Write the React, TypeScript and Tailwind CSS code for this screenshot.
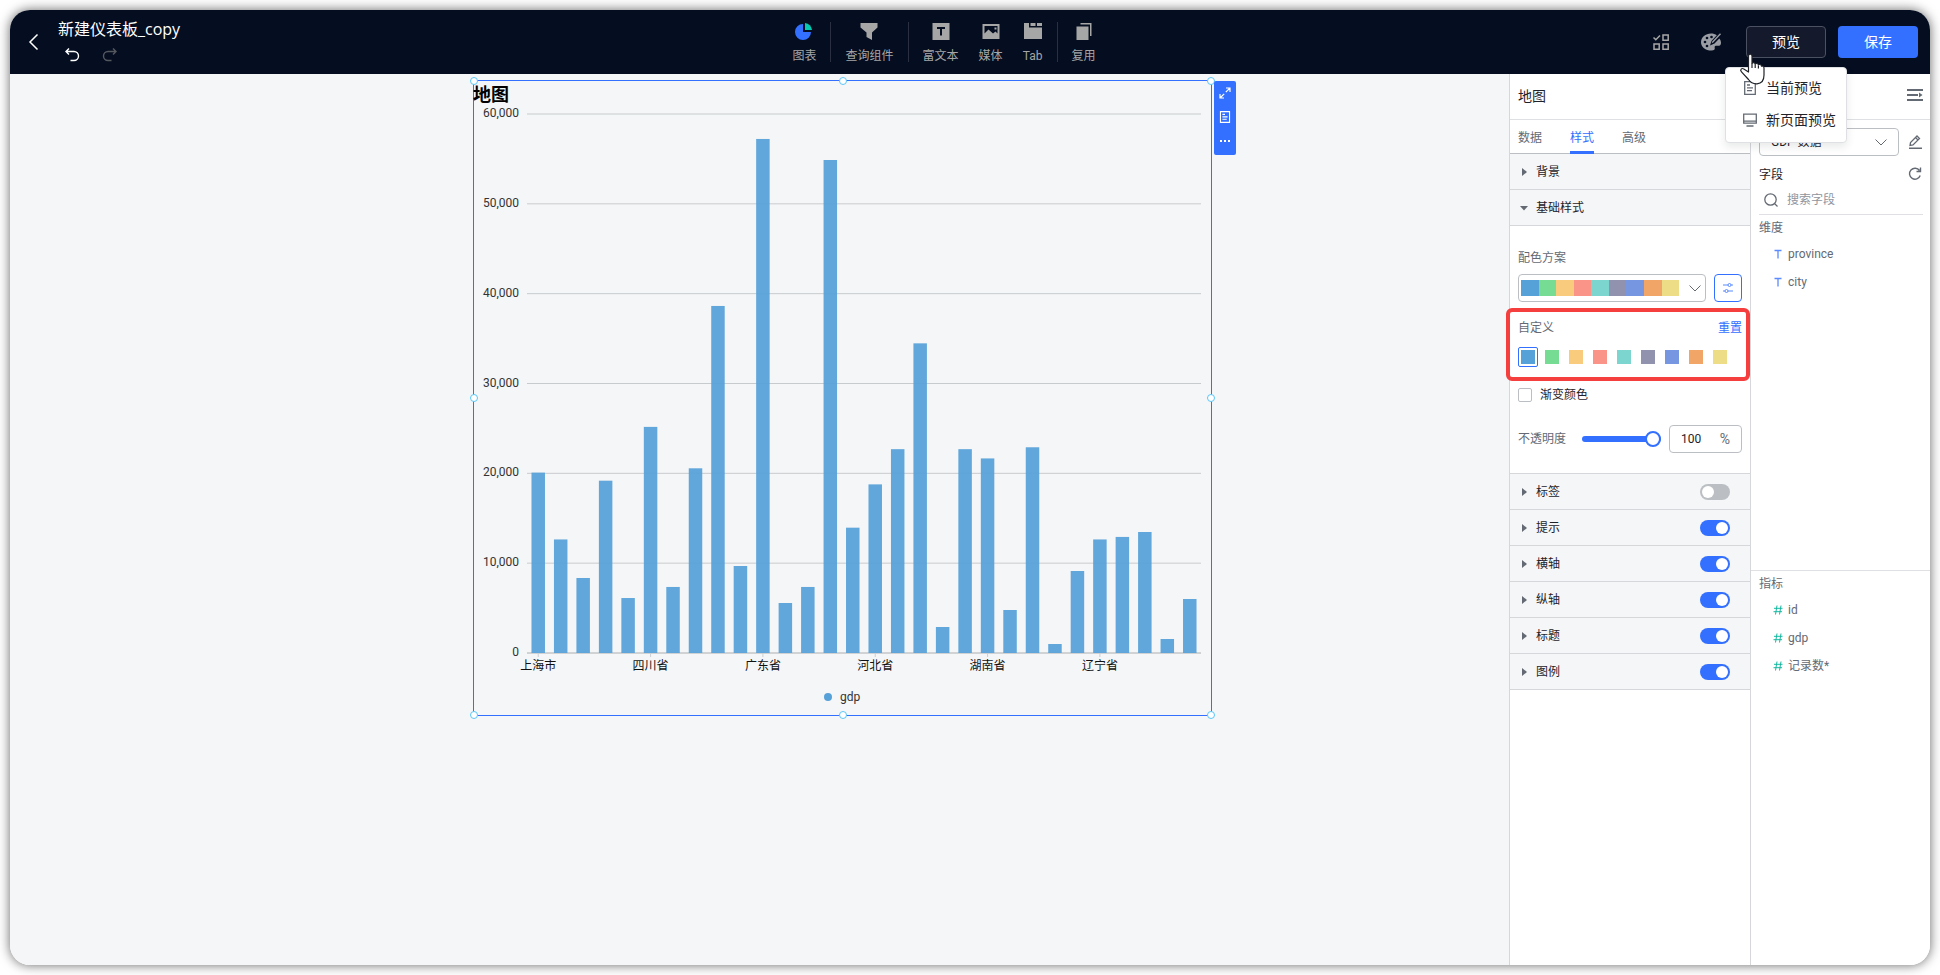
import { useState } from 'react';
import type { ReactNode } from 'react';

const PALETTE = [
  { name: 'blue', bg: 'bg-[#57a1d9]' },
  { name: 'green', bg: 'bg-[#76db93]' },
  { name: 'amber', bg: 'bg-[#f9cb7d]' },
  { name: 'coral', bg: 'bg-[#fa9488]' },
  { name: 'teal', bg: 'bg-[#7dd5cf]' },
  { name: 'slate', bg: 'bg-[#9192ae]' },
  { name: 'indigo', bg: 'bg-[#7796e1]' },
  { name: 'orange', bg: 'bg-[#f1a667]' },
  { name: 'yellow', bg: 'bg-[#eedd87]' },
];

const GDP = [
  20080, 12640, 8350, 19180, 6120, 25170, 7350, 20560, 38630, 9685, 57220, 5566, 7350, 54880, 13950,
  18770, 22690, 34470, 2894, 22690, 21660, 4787, 22900, 1000, 9128, 12640, 12920, 13470, 1558, 6011,
];

const X_LABELS = ['上海市', '四川省', '广东省', '河北省', '湖南省', '辽宁省'];

const PLOT = { left: 53, right: 727, top: 5, bottom: 544, max: 60000 };

const HANDLES = [
  'left-0 top-0',
  'left-1/2 top-0',
  'left-full top-0',
  'left-0 top-1/2',
  'left-full top-1/2',
  'left-0 top-full',
  'left-1/2 top-full',
  'left-full top-full',
];

function BarChart() {
  const band = (PLOT.right - PLOT.left) / GDP.length;
  const y = (v: number) => PLOT.bottom - (v / PLOT.max) * (PLOT.bottom - PLOT.top);
  const ticks = [0, 10000, 20000, 30000, 40000, 50000, 60000];

  return (
    <svg
      viewBox="0 0 737 606"
      className="block w-full overflow-visible text-xs"
      role="img"
      aria-label="gdp"
    >
      {ticks.map((v) => (
        <g key={v}>
          <line
            x1={PLOT.left}
            x2={PLOT.right}
            y1={y(v)}
            y2={y(v)}
            stroke={v === 0 ? '#d0d2d4' : '#c8cbce'}
            strokeWidth={v === 0 ? 2 : 1}
          />
          <text x={45} y={y(v) + 3} textAnchor="end" fill="#333">
            {v.toLocaleString('en-US')}
          </text>
        </g>
      ))}
      {GDP.map((v, i) => (
        <rect
          key={i}
          x={PLOT.left + band * i + band * 0.2}
          y={y(v)}
          width={band * 0.6}
          height={PLOT.bottom - y(v)}
          fill="#57a1d9"
          fillOpacity={0.94}
        />
      ))}
      {X_LABELS.map((label, i) => {
        const x = PLOT.left + band * (i * 5 + 0.5);
        return (
          <g key={label}>
            <line x1={x} x2={x} y1={544} y2={548} stroke="#cccfd2" />
            <text x={x} y={561} textAnchor="middle" fill="#111">
              {label}
            </text>
          </g>
        );
      })}
      <circle cx={354} cy={588} r={4} fill="#57a1d9" />
      <text x={366} y={592} fill="#333">
        gdp
      </text>
    </svg>
  );
}

function Tool({ label, children }: { label: string; children: ReactNode }) {
  return (
    <button className="flex flex-col items-center gap-[5px] px-[10px] pt-[3px] text-xs leading-5 text-[#a6a6a6]">
      <svg width="20" height="20" viewBox="0 0 20 20" fill="#a6a6a6" aria-hidden="true">
        {children}
      </svg>
      {label}
    </button>
  );
}

function ToolGroup({ last, children }: { last?: boolean; children: ReactNode }) {
  return (
    <div className={`flex h-10 items-center px-1 ${last ? '' : 'border-r border-[#2a3040]'}`}>
      {children}
    </div>
  );
}

function Caret({ open }: { open?: boolean }) {
  return (
    <svg width="10" height="10" viewBox="0 0 10 10" fill="#646a73" aria-hidden="true">
      {open ? <path d="M2 3h8L6 7.500z" /> : <path d="M4 1v8l5-4z" />}
    </svg>
  );
}

function Chevron() {
  return (
    <svg width="12" height="12" viewBox="0 0 12 12" fill="none" stroke="#646a73" aria-hidden="true">
      <path d="M.5 3.500 6 9l5.500-5.500" />
    </svg>
  );
}

function DocIcon({ className }: { className: string }) {
  return (
    <svg
      width="14"
      height="14"
      viewBox="0 0 14 14"
      fill="none"
      stroke="currentColor"
      strokeWidth="1.300"
      className={className}
      aria-hidden="true"
    >
      <path d="M1.700.700h10.600v12.600H1.700zM4 4h3M4 6.800h6M4 9.600h5" />
    </svg>
  );
}

function Section({ title, open }: { title: string; open?: boolean }) {
  return (
    <button className="flex h-9 w-full items-center gap-2 border-b border-[#d5d7da] bg-[#f5f6f7] pl-2 text-[#1f2329]">
      <Caret open={open} />
      {title}
    </button>
  );
}

function SwitchSection({ title, defaultOn }: { title: string; defaultOn: boolean }) {
  const [on, setOn] = useState(defaultOn);
  return (
    <label className="flex h-9 items-center gap-2 border-b border-[#d5d7da] bg-[#f5f6f7] pr-5 pl-2 text-[#1f2329]">
      <Caret />
      <span className="flex-1">{title}</span>
      <input
        type="checkbox"
        role="switch"
        checked={on}
        onChange={(e) => setOn(e.target.checked)}
        className="h-4 w-[30px] appearance-none rounded-full bg-[#bbbfc4] p-[2px] before:block before:size-3 before:rounded-full before:bg-white checked:bg-[#3370ff] checked:before:translate-x-[14px]"
      />
    </label>
  );
}

function Field({ kind, name }: { kind: 'text' | 'number'; name: string }) {
  return (
    <li className="flex h-7 items-center gap-[5px] pl-[14px]">
      <svg width="10" height="10" viewBox="0 0 10 10" fill="none" aria-hidden="true">
        {kind === 'text' ? (
          <path d="M1.500 1.500h7M5 1.500V9.500" stroke="#5b8bff" strokeWidth="1.300" />
        ) : (
          <path d="M4 .5 2.500 9.500M8 .5 6.500 9.500M1 3.300h8.500M.5 6.700H9" stroke="#14b8a0" />
        )}
      </svg>
      {name}
    </li>
  );
}

function Header() {
  return (
    <header className="relative z-20 flex h-16 shrink-0 items-center bg-[#050e21]">
      <div className="flex flex-1 items-center">
        <button aria-label="返回" className="ml-4">
          <svg width="16" height="20" viewBox="0 0 16 20" fill="none" stroke="#fff" strokeWidth="1.500">
            <path d="M11.500 2.500 4 10l7.500 7.500" />
          </svg>
        </button>
        <div className="ml-4 flex flex-col gap-[2px]">
          <h1 className="font-['Open_Sans','Noto_Sans_CJK_SC',sans-serif] text-base leading-6 text-white">
            新建仪表板_copy
          </h1>
          <div className="flex h-6 items-center gap-[22px] pl-[6px]">
            <button aria-label="撤销">
              <svg width="16" height="16" viewBox="0 0 16 16" fill="none" stroke="#fff" strokeWidth="1.400">
                <path d="M5 1.500 2 4.500l3 3M2 4.500h8a4.500 4.500 0 0 1 0 9H6.500" />
              </svg>
            </button>
            <button aria-label="重做" disabled>
              <svg width="16" height="16" viewBox="0 0 16 16" fill="none" stroke="#55585f" strokeWidth="1.400">
                <path d="M11 1.500l3 3-3 3M14 4.500H6a4.500 4.500 0 0 0 0 9h3.500" />
              </svg>
            </button>
          </div>
        </div>
      </div>

      <nav className="mr-10 flex items-center">
        <ToolGroup>
          <Tool label="图表">
            <path d="M9 3v8h8a8 8 0 1 1-8-8z" fill="#3370ff" />
            <path d="M11 2a7.500 7.500 0 0 1 7 7h-7z" fill="#04c9b0" />
          </Tool>
        </ToolGroup>
        <ToolGroup>
          <Tool label="查询组件">
            <path d="M1.500 2h17v4.500L13 11.500V19l-5.500-3v-4.500l-6-5z" />
          </Tool>
        </ToolGroup>
        <ToolGroup>
          <Tool label="富文本">
            <path d="M1.500 2h17v17h-17zM6 6v2h3v6.500h2V8h3V6z" fillRule="evenodd" />
          </Tool>
          <Tool label="媒体">
            <path
              d="M1.500 3h17v15h-17zM3.500 5v7.500l4-4 4.500 4 2.500-2 2 2V5zM13.500 6.500h2v2h-2z"
              fillRule="evenodd"
            />
          </Tool>
          <Tool label="Tab">
            <path d="M1 2h5v4.500h13V18H1zM7.500 2h5v3h-5zM14 2h5v3h-5z" />
          </Tool>
        </ToolGroup>
        <ToolGroup last>
          <Tool label="复用">
            <path d="M2.500 5.500h12V19h-12zM6.500 2h11v13H16V3.500H6.500z" />
          </Tool>
        </ToolGroup>
      </nav>

      <div className="flex flex-1 items-center justify-end gap-3 pr-3 text-sm">
        <button aria-label="批量操作" className="mr-[20px]">
          <svg width="16" height="16" viewBox="0 0 16 16" fill="none" stroke="#a6a6a6" strokeWidth="1.500">
            <path d="M.5 3.500 2.800 5.800 7 1.500M10 1h5.200v5.200H10zM1 10h5.200v5.200H1zM10 10h5.200v5.200H10z" />
          </svg>
        </button>
        <button aria-label="仪表板样式" className="mr-[13px]">
          <svg width="20" height="18" viewBox="0 0 20 18" fill="#9a9da3">
            <path d="M10 .5c2.200 0 4.300.6 5.800 1.700L10.500 8 9 12.500l4.500-2 4.800-5C19.400 6.800 20 8.300 20 10c0 2.500-1.700 3-3.500 2.800-2-.2-3.300.3-2.800 1.900.5 1.800-.7 2.800-3.200 2.800C4.500 17.500 0 14 0 9.200 0 4.200 4.500.5 10 .5z" />
            <path d="M19 .2l1 1-7.800 8.300-1.500.7.500-1.600z" />
            <g fill="#050e21">
              <circle cx="10.500" cy="4" r="1.300" />
              <circle cx="6" cy="5" r="1.300" />
              <circle cx="4" cy="9" r="1.300" />
              <circle cx="6" cy="13" r="1.300" />
            </g>
          </svg>
        </button>
        <div className="relative">
          <button className="h-8 w-20 rounded border border-[#4b5160] bg-[#141a2b] text-white">
            预览
          </button>
          <ul
            role="menu"
            className="absolute top-[41px] left-[-21px] w-[122px] rounded border border-[#dee0e3] bg-white pt-1 pb-[6px] text-[#1f2329] shadow-[0_4px_8px_rgba(31,35,41,0.1)]"
          >
            <li role="none">
              <button role="menuitem" className="flex h-8 w-full items-center gap-[9px] pl-[17px]">
                <DocIcon className="text-[#646a73]" />
                当前预览
              </button>
            </li>
            <li role="none">
              <button role="menuitem" className="flex h-8 w-full items-center gap-[9px] pl-[17px]">
                <svg width="14" height="14" viewBox="0 0 14 14" fill="none" stroke="#646a73" strokeWidth="1.300">
                  <path d="M.7 1.200h12.600v9H.7zM.7 8.200h12.600M3.500 13h7" />
                </svg>
                新页面预览
              </button>
            </li>
          </ul>
          {/* pointer hand resting on the preview button */}
          <svg
            width="26"
            height="32"
            viewBox="0 0 26 32"
            fill="#fff"
            stroke="#1f2329"
            strokeWidth="1.200"
            strokeLinejoin="round"
            className="pointer-events-none absolute top-[27px] left-[-7px]"
            aria-hidden="true"
          >
            <path d="M9.500 17V3c0-2.500 3.500-2.500 3.500 0v7.500c.5-1.200 3-1 3.200.7.600-1.200 3-.9 3.200.8.700-1 3-.7 3.100 1.200.6-.4 2.500 0 2.500 1.800v7c0 5-2.500 8.500-7 8.800-4 .2-6.500-1.300-8.500-4.300L2.500 18.800c-2-2.300.3-4.100 2.300-2.800L9.500 19z" />
            <path d="M13 10.500V15M16.200 11.500V15M19.400 12.500V15.500" fill="none" />
          </svg>
        </div>
        <button className="h-8 w-20 rounded bg-[#3370ff] text-white">保存</button>
      </div>
    </header>
  );
}

function Canvas() {
  return (
    <main className="relative min-w-0 flex-1 bg-[#f5f6f7]">
      <section className="absolute top-[6px] left-[463px] w-[739px] border border-[#3370ff]">
        <h2 className="-ml-px h-7 text-lg leading-7 font-bold text-black">地图</h2>
        <BarChart />
        {HANDLES.map((pos) => (
          <span
            key={pos}
            className={`absolute size-2 -translate-1/2 rounded-full border border-[#59c7f9] bg-white ${pos}`}
          />
        ))}
        <div className="absolute top-0 left-full ml-[3px] flex h-[74px] w-[22px] flex-col items-center justify-around rounded-[2px] bg-[#3370ff] pb-[2px] text-white">
          <button aria-label="放大">
            <svg width="12" height="12" viewBox="0 0 12 12" fill="none" stroke="currentColor" strokeWidth="1.200">
              <path d="M7 1h4v4M11 1 6.800 5.200M5 11H1V7M1 11l4.200-4.200" />
            </svg>
          </button>
          <button aria-label="查看数据">
            <DocIcon className="size-3" />
          </button>
          <button aria-label="更多">
            <svg width="12" height="12" viewBox="0 0 12 12" fill="currentColor">
              <path d="M1 5h2v2H1zM5 5h2v2H5zM9 5h2v2H9z" />
            </svg>
          </button>
        </div>
      </section>
    </main>
  );
}

function StylePanel() {
  const [selected, setSelected] = useState('blue');
  const [opacity, setOpacity] = useState(100);

  return (
    <aside className="w-[241px] shrink-0 border-l border-[#d5d7da] bg-white">
      <h2 className="h-[46px] border-b border-[#dee0e3] pl-2 text-sm leading-[44px] text-[#1f2329]">
        地图
      </h2>
      <div
        role="tablist"
        className="flex h-[34px] gap-7 border-b border-[#bbbfc4] pt-[2px] pl-2 text-[#646a73]"
      >
        <button role="tab">数据</button>
        <button role="tab" aria-selected="true" className="relative text-[#3370ff]">
          样式
          <span className="absolute inset-x-0 -bottom-px h-[3px] bg-[#3370ff]" />
        </button>
        <button role="tab">高级</button>
      </div>

      <Section title="背景" />
      <Section title="基础样式" open />

      <div className="border-b border-[#d5d7da] px-2 pt-[22px] pb-5 text-[#646a73]">
        <p className="leading-5">配色方案</p>
        <div className="mt-[6px] flex gap-2">
          <button
            aria-label="配色方案"
            aria-haspopup="listbox"
            className="flex h-7 flex-1 items-center justify-between rounded border border-[#bbbfc4] pr-1 pl-[2px]"
          >
            <span className="flex h-4 w-[158px]">
              {PALETTE.map((c) => (
                <span key={c.name} className={`flex-1 ${c.bg}`} />
              ))}
            </span>
            <Chevron />
          </button>
          <button
            aria-label="自定义配色"
            className="flex size-7 items-center justify-center rounded border border-[#3370ff]"
          >
            <svg width="12" height="12" viewBox="0 0 12 12" fill="none" stroke="#5b8bff">
              <path d="M1 3h5M9 3h2M1 9h2M6 9h5" strokeWidth="1.200" />
              <circle cx="7.500" cy="3" r="1.500" />
              <circle cx="4.500" cy="9" r="1.500" />
            </svg>
          </button>
        </div>

        <div className="relative z-10 mt-[6px] -mr-2 -ml-3 h-[73px] rounded-md border-4 border-[#f53f3f] pt-[6px] pr-1 pl-2">
          <div className="flex justify-between leading-5">
            <span>自定义</span>
            <button className="text-[#3370ff]">重置</button>
          </div>
          <div className="mt-[9px] flex gap-1">
            {PALETTE.map((c) => (
              <button
                key={c.name}
                aria-label={c.name}
                onClick={() => setSelected(c.name)}
                className={`flex size-5 items-center justify-center rounded-[2px] border ${
                  c.name === selected ? 'border-[#3370ff]' : 'border-transparent'
                }`}
              >
                <span className={`size-[14px] ${c.bg}`} />
              </button>
            ))}
          </div>
        </div>

        <label className="mt-1 flex h-5 items-center gap-2 text-[#1f2329]">
          <input
            type="checkbox"
            className="size-[14px] appearance-none rounded-[2px] border border-[#bbbfc4] checked:bg-[#3370ff]"
          />
          渐变颜色
        </label>

        <div className="mt-5 flex h-7 items-center">
          <label htmlFor="opacity" className="w-16">
            不透明度
          </label>
          <input
            id="opacity"
            type="range"
            min={0}
            max={100}
            value={opacity}
            onChange={(e) => setOpacity(Number(e.target.value))}
            className="h-[6px] w-[79px] appearance-none rounded-full bg-[#3370ff] [&::-webkit-slider-thumb]:size-4 [&::-webkit-slider-thumb]:appearance-none [&::-webkit-slider-thumb]:rounded-full [&::-webkit-slider-thumb]:border-2 [&::-webkit-slider-thumb]:border-[#3370ff] [&::-webkit-slider-thumb]:bg-white"
          />
          <div className="ml-2 flex h-7 flex-1 items-center rounded border border-[#bbbfc4] px-[11px]">
            <input
              aria-label="不透明度数值"
              value={opacity}
              onChange={(e) => setOpacity(Number(e.target.value) || 0)}
              className="w-0 flex-1 text-[#1f2329] outline-none"
            />
            <span className="text-sm">%</span>
          </div>
        </div>
      </div>

      <SwitchSection title="标签" defaultOn={false} />
      <SwitchSection title="提示" defaultOn />
      <SwitchSection title="横轴" defaultOn />
      <SwitchSection title="纵轴" defaultOn />
      <SwitchSection title="标题" defaultOn />
      <SwitchSection title="图例" defaultOn />
    </aside>
  );
}

function DataPanel() {
  return (
    <aside className="w-[180px] shrink-0 border-l border-[#d5d7da] bg-white text-[#646a73]">
      <div className="flex h-[46px] items-center justify-end border-b border-[#dee0e3] pr-[7px] pb-1">
        <button aria-label="收起">
          <svg width="16" height="14" viewBox="0 0 16 14" fill="none" stroke="#646a73" strokeWidth="2">
            <path d="M0 2h16M0 7h11M0 12h16" />
            <path d="M12 4.500v5l3.500-2.500z" fill="#646a73" stroke="none" />
          </svg>
        </button>
      </div>

      <div className="h-[451px] border-b border-[#dee0e3] pt-2 pr-[7px] pl-2">
        <div className="flex items-center justify-between">
          <div className="relative flex items-center">
            <select
              aria-label="数据集"
              className="h-7 w-[140px] appearance-none rounded border border-[#bbbfc4] bg-white pl-[11px] text-[#1f2329]"
            >
              <option>GDP 数据</option>
            </select>
            <span className="pointer-events-none absolute right-3">
              <Chevron />
            </span>
          </div>
          <button aria-label="编辑数据集">
            <svg width="16" height="16" viewBox="0 0 16 16" fill="none" stroke="#646a73" strokeWidth="1.300">
              <path d="M3 11.500 3.500 8.500 10 2l2.500 2.500L6 11z" />
              <path d="M8.500 3.500 11 6" />
              <path d="M2 14.300h13" strokeWidth="1.500" />
            </svg>
          </button>
        </div>
        <div className="mt-[9px] flex h-5 items-center justify-between text-[#1f2329]">
          字段
          <button aria-label="刷新">
            <svg width="16" height="16" viewBox="0 0 16 16" fill="none" stroke="#646a73" strokeWidth="1.400">
              <path d="M13.200 8.500A5.500 5.500 0 1 1 12.500 3.500M13.500 .5V4.500h-4" />
            </svg>
          </button>
        </div>
        <label className="flex h-[30px] items-center gap-[9px] border-b border-[#dee0e3] pl-[5px]">
          <svg width="14" height="14" viewBox="0 0 14 14" fill="none" stroke="#646a73" strokeWidth="1.300">
            <circle cx="6.500" cy="6.500" r="5.700" />
            <path d="M10.500 10.500 13.500 13.500" />
          </svg>
          <input
            placeholder="搜索字段"
            aria-label="搜索字段"
            className="w-0 flex-1 outline-none placeholder:text-[#8f959e]"
          />
        </label>
        <h3 className="mt-[3px] leading-5">维度</h3>
        <ul className="mt-[2px]">
          <Field kind="text" name="province" />
          <Field kind="text" name="city" />
        </ul>
      </div>

      <div className="px-2 pt-[3px]">
        <h3 className="leading-5">指标</h3>
        <ul className="mt-[2px]">
          <Field kind="number" name="id" />
          <Field kind="number" name="gdp" />
          <Field kind="number" name="记录数*" />
        </ul>
      </div>
    </aside>
  );
}

export default function App() {
  return (
    <div className="flex min-h-screen bg-white p-[10px] font-['Roboto','Noto_Sans_CJK_SC',sans-serif] text-xs">
      <div className="flex min-w-0 flex-1 flex-col overflow-hidden rounded-[20px] bg-white shadow-[0_0_12px_rgba(0,0,0,0.6)]">
        <Header />
        <div className="flex flex-1">
          <Canvas />
          <StylePanel />
          <DataPanel />
        </div>
      </div>
    </div>
  );
}
